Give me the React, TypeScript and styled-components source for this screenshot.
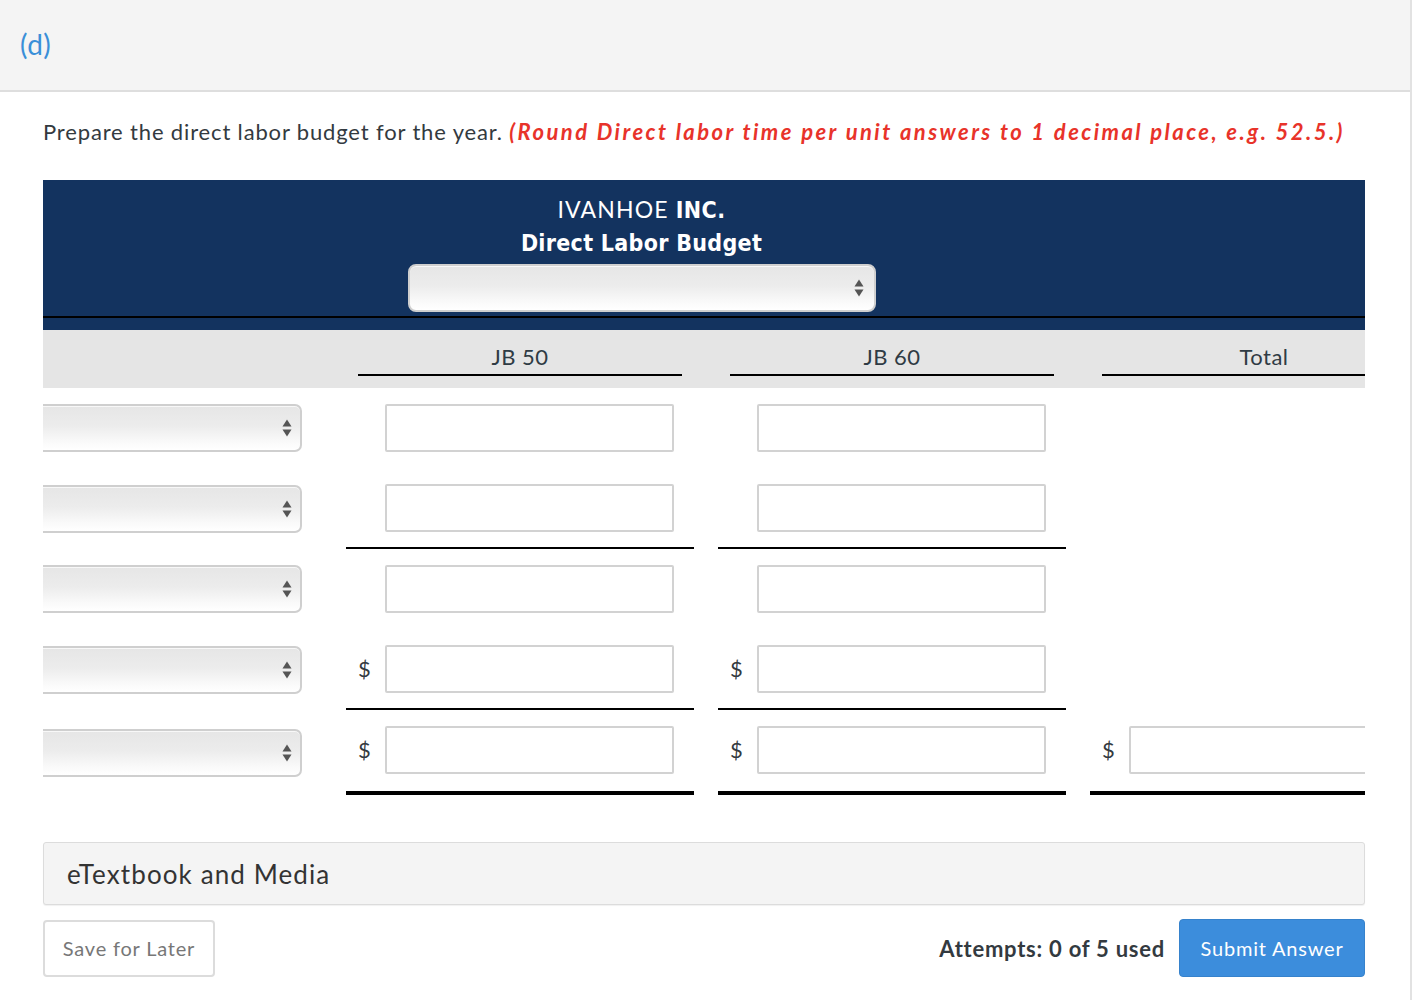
import React from "react";
import styled, { createGlobalStyle } from "styled-components";

const Global = createGlobalStyle`
  html, body { margin: 0; padding: 0; background: #fff; }
  body {
    font-family: Lato, "Open Sans", Arial, sans-serif;
    color: #333a40;
    letter-spacing: 0.8px;
  }
  * { box-sizing: border-box; }
`;

const Page = styled.div`
  width: 1412px;
  min-height: 1000px;
  border-right: 2px solid #e2e2e2;
`;

const TopBar = styled.div`
  height: 92px;
  background: #f4f4f4;
  border-bottom: 2px solid #dedede;
  display: flex;
  align-items: center;
  padding-left: 20px;
`;

const PartLabel = styled.span`
  font-size: 28px;
  color: #3a8fd8;
  line-height: 1;
  padding-bottom: 2px;
  letter-spacing: 0.5px;
`;

const Content = styled.div`
  padding: 25px 45px 0 43px;
`;

const Instruction = styled.p`
  margin: 0;
  font-size: 22px;
  line-height: 30px;
  height: 30px;
  color: #333a40;
  white-space: nowrap;
  letter-spacing: 0.85px;
`;

const Hint = styled.span`
  color: #e8332a;
  font-weight: 700;
  font-style: italic;
  letter-spacing: 2.44px;
`;

const TableWrap = styled.div`
  margin-top: 33px;
  width: 1322px;
  overflow: hidden;
`;

const Navy = styled.div`
  background: #13335f;
  padding-top: 12px;
  width: 1395px;
`;

const TitleBlock = styled.div`
  width: 1197px;
  display: flex;
  flex-direction: column;
  align-items: center;
  color: #fff;
`;

const CompanyLine = styled.div`
  font-family: Lato, "Open Sans", sans-serif;
  font-size: 23px;
  line-height: 34px;
  height: 34px;
  letter-spacing: 1.15px;
  white-space: nowrap;
`;

const CompanyStrong = styled.b`
  font-family: "DejaVu Sans", Verdana, sans-serif;
  font-stretch: condensed;
  font-weight: 700;
  letter-spacing: 0.46px;
  line-height: 1;
`;

const BudgetLine = styled.div`
  font-family: "DejaVu Sans", Verdana, sans-serif;
  font-stretch: condensed;
  font-size: 23px;
  font-weight: 700;
  line-height: 34px;
  height: 34px;
  letter-spacing: 0.3px;
  white-space: nowrap;
`;

const SelectBox = styled.div<{ $wide?: boolean }>`
  height: 48px;
  width: ${(p) => (p.$wide ? "468px" : "259px")};
  flex: none;
  border: 2px solid #cfcfcf;
  ${(p) => (p.$wide ? "" : "border-left: none;")}
  border-radius: ${(p) => (p.$wide ? "8px" : "0 7px 7px 0")};
  background: linear-gradient(to bottom, #e6e6e6 0%, #ececec 45%, #f9f9f9 80%, #ffffff 100%);
  box-shadow: inset 0 1px 0 rgba(255, 255, 255, 0.7);
  display: flex;
  align-items: center;
  justify-content: flex-end;
  padding-right: ${(p) => (p.$wide ? "10px" : "8px")};
  margin-top: ${(p) => (p.$wide ? "4px" : "0")};
`;

const Rule = styled.div`
  height: 2px;
  background: #000;
  margin-top: 4px;
`;

const NavyBottom = styled.div`
  height: 12px;
`;

const Grid = styled.div`
  display: grid;
  grid-template-columns: 279px 348px 348px 348px;
  column-gap: 24px;
  width: 1395px;
`;

const HeadGrid = styled(Grid)`
  background: #e5e5e5;
  height: 58px;
  align-items: end;
`;

const HeadCell = styled.div`
  padding: 0 12px 12px;
`;

const HeadText = styled.div`
  border-bottom: 2px solid #000;
  text-align: center;
  font-size: 22px;
  line-height: 30px;
  padding-bottom: 2px;
  color: #2f3b44;
  letter-spacing: 0.44px;
`;

type Line = "none" | "thin" | "thick";

const Cell = styled.div<{ $line: Line }>`
  display: flex;
  align-items: center;
  padding: 16px 0 ${(p) => (p.$line === "thin" ? "15px" : p.$line === "thick" ? "17px" : "16px")} 12px;
  border-bottom: ${(p) =>
    p.$line === "thin" ? "2px solid #000" : p.$line === "thick" ? "4px solid #000" : "none"};
`;

const LabelCell = styled.div`
  display: flex;
  align-items: center;
  padding: 16px 0;
`;

const Dollar = styled.span`
  width: 27px;
  flex: none;
  font-size: 22px;
  color: #333a40;
  line-height: 1;
`;

const Input = styled.div`
  width: 289px;
  height: 48px;
  flex: none;
  border: 2px solid #d2d2d2;
  border-radius: 2px;
  background: #fff;
`;

const Panel = styled.div`
  margin-top: 47px;
  height: 63px;
  background: #f4f4f4;
  border: 1px solid #dcdcdc;
  border-radius: 3px;
  box-shadow: 0 1px 1px rgba(0, 0, 0, 0.06);
  display: flex;
  align-items: center;
  padding-left: 23px;
  font-size: 26px;
  color: #333;
  letter-spacing: 1.1px;
`;

const Footer = styled.div`
  margin-top: 14px;
  display: flex;
  align-items: center;
`;

const SaveButton = styled.div`
  width: 172px;
  height: 57px;
  border: 2px solid #dcdcdc;
  border-radius: 4px;
  display: flex;
  align-items: center;
  justify-content: center;
  font-size: 20px;
  color: #777;
`;

const Spacer = styled.div`
  flex: 1;
`;

const Attempts = styled.div`
  font-size: 22px;
  font-weight: 700;
  color: #333a40;
  margin-right: 14px;
  letter-spacing: 0.75px;
`;

const SubmitButton = styled.div`
  width: 186px;
  height: 58px;
  background: #3c8ddc;
  border: 1px solid #3682cc;
  border-radius: 4px;
  display: flex;
  align-items: center;
  justify-content: center;
  font-size: 20px;
  color: #fff;
`;

const Arrows = () => (
  <svg width="10" height="20" viewBox="0 0 10 20">
    <path d="M5 1.5 L9.5 8.5 L0.5 8.5 Z" fill="#555" />
    <path d="M0.5 11.5 L9.5 11.5 L5 18.5 Z" fill="#555" />
  </svg>
);

type Row = {
  dollar: boolean;
  line: Line;
  total: boolean;
};

const rows: Row[] = [
  { dollar: false, line: "none", total: false },
  { dollar: false, line: "thin", total: false },
  { dollar: false, line: "none", total: false },
  { dollar: true, line: "thin", total: false },
  { dollar: true, line: "thick", total: true },
];

export default function App() {
  return (
    <Page>
      <Global />
      <TopBar>
        <PartLabel>(d)</PartLabel>
      </TopBar>
      <Content>
        <Instruction>
          Prepare the direct labor budget for the year.{" "}
          <Hint>(Round Direct labor time per unit answers to 1 decimal place, e.g. 52.5.)</Hint>
        </Instruction>
        <TableWrap>
          <Navy>
            <TitleBlock>
              <CompanyLine>
                IVANHOE <CompanyStrong>INC.</CompanyStrong>
              </CompanyLine>
              <BudgetLine>Direct Labor Budget</BudgetLine>
              <SelectBox $wide>
                <Arrows />
              </SelectBox>
            </TitleBlock>
            <Rule />
            <NavyBottom />
          </Navy>
          <HeadGrid>
            <div />
            <HeadCell>
              <HeadText>JB 50</HeadText>
            </HeadCell>
            <HeadCell>
              <HeadText>JB 60</HeadText>
            </HeadCell>
            <HeadCell>
              <HeadText>Total</HeadText>
            </HeadCell>
          </HeadGrid>
          {rows.map((r, i) => (
            <Grid key={i}>
              <LabelCell>
                <SelectBox>
                  <Arrows />
                </SelectBox>
              </LabelCell>
              <Cell $line={r.line}>
                <Dollar>{r.dollar ? "$" : ""}</Dollar>
                <Input />
              </Cell>
              <Cell $line={r.line}>
                <Dollar>{r.dollar ? "$" : ""}</Dollar>
                <Input />
              </Cell>
              {r.total ? (
                <Cell $line={r.line}>
                  <Dollar>$</Dollar>
                  <Input />
                </Cell>
              ) : (
                <div />
              )}
            </Grid>
          ))}
        </TableWrap>
        <Panel>eTextbook and Media</Panel>
        <Footer>
          <SaveButton>Save for Later</SaveButton>
          <Spacer />
          <Attempts>Attempts: 0 of 5 used</Attempts>
          <SubmitButton>Submit Answer</SubmitButton>
        </Footer>
      </Content>
    </Page>
  );
}
